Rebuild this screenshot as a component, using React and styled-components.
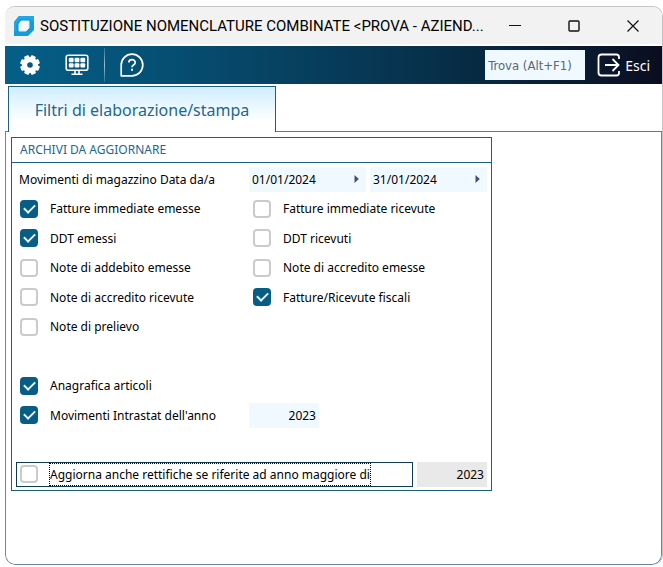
import { useState } from "react";
import styled, { createGlobalStyle } from "styled-components";

const GlobalStyle = createGlobalStyle`
  * {
    box-sizing: border-box;
  }
  body {
    margin: 0;
    background: #fff;
    color: #000;
    font-family: "Noto Sans", sans-serif;
    font-size: 12px;
  }
  button, input {
    font: inherit;
    color: inherit;
  }
`;

const Window = styled.div`
  display: flex;
  flex-direction: column;
  min-height: calc(100vh - 8px);
  margin: 6px 0 0 5px;
  border: 1px solid #c4c4c4;
  border-width: 1px 1px 0 0;
  border-radius: 10px;
  overflow: hidden;
`;

const TitleBar = styled.header`
  display: flex;
  align-items: center;
  height: 37px;
  padding-left: 9px;
  background: #f2f2f2;
`;

const Title = styled.h1`
  flex: 1;
  min-width: 0;
  margin: 0 0 0 6px;
  font-family: Roboto, sans-serif;
  font-size: 15px;
  font-weight: 400;
  white-space: nowrap;
`;

const WindowButton = styled.button`
  display: flex;
  flex-shrink: 0;
  align-items: center;
  justify-content: center;
  width: 59px;
  height: 37px;
  padding: 0;
  border: none;
  background: none;
`;

const Toolbar = styled.div`
  display: flex;
  align-items: center;
  height: 38px;
  margin-top: 2px;
  padding: 0 12px 0 14px;
  background: linear-gradient(90deg, #045f88 0%, #064b6e 30%, #07304a 65%, #091d35 85%, #0b0d1f 100%);
  color: #fff;
`;

const ToolButton = styled.button`
  display: flex;
  align-items: center;
  gap: 4px;
  padding: 0;
  border: none;
  background: none;
  font-size: 14px;
`;

const ToolGroup = styled.div`
  display: flex;
  align-items: center;
  flex: 1;
  gap: 24px;
`;

const Divider = styled.span`
  width: 1px;
  height: 34px;
  margin: 0 -9px;
  background: linear-gradient(#2b7296, #9cc0d0, #2b7296);
`;

const SearchInput = styled.input`
  width: 100px;
  height: 30px;
  margin-right: 12px;
  padding: 0 3px;
  border: none;
  border-radius: 0;
  background: #f0f9ff;
  font-family: "DejaVu Sans Condensed", sans-serif;
  font-size: 13px;
  &::placeholder {
    color: #5c6670;
    opacity: 1;
  }
`;

const TabBar = styled.div`
  display: flex;
  height: 48px;
  padding: 2px 0 0 3px;
  background: linear-gradient(#5b7d9c, #5b7d9c) bottom / 100% 1px no-repeat;
`;

const Tab = styled.button`
  width: 268px;
  padding: 0;
  border: 1px solid #1d5f7e;
  border-bottom: none;
  background: linear-gradient(#cfeeff, #fff 75%);
  color: #22678d;
  font-size: 16px;
`;

const Page = styled.main`
  flex: 1;
  padding: 5px;
  border: 1px solid #6b84a6;
  border-top: none;
  border-radius: 0 0 10px 10px;
`;

const Panel = styled.section`
  max-width: 481px;
  border: 1px solid #1d5f7e;
`;

const PanelTitle = styled.h2`
  height: 25px;
  margin: 0;
  padding-left: 8px;
  border-bottom: 1px solid #1d5f7e;
  color: #22678d;
  font-size: 12px;
  font-weight: 400;
  line-height: 24px;
`;

const FilterGrid = styled.div`
  display: grid;
  grid-template-columns: 233px minmax(0, 1fr);
  grid-template-rows: repeat(5, 30px 29px) 30px;
  align-items: center;
  padding: 1px 4px;
`;

const RangeLabel = styled.span`
  padding-left: 3px;
`;

const FieldRow = styled.div`
  display: flex;
  gap: 4px;
`;

const FocusRow = styled(FieldRow)`
  grid-row: 11;
  grid-column: 1 / -1;
`;

const DateBox = styled.div`
  display: flex;
  flex: 1;
  align-items: center;
  min-width: 0;
  height: 25px;
  padding-right: 7px;
  background: #f0f9ff;
`;

const DateInput = styled.input`
  flex: 1;
  min-width: 0;
  padding: 0 3px;
  border: none;
  background: none;
`;

const PickerButton = styled.button`
  display: flex;
  padding: 0;
  border: none;
  background: none;
`;

const YearInput = styled.input`
  width: 70px;
  height: 25px;
  padding: 0 3px;
  border: none;
  border-radius: 0;
  background: ${(p) => (p.disabled ? "#e9e9e9" : "#f0f9ff")};
  color: #000;
  text-align: right;
  ${(p) => p.$row && `grid-row: ${p.$row};`}
`;

const CheckLabel = styled.label`
  display: flex;
  align-items: center;
  gap: 12px;
  height: 25px;
  padding-left: 4px;
  ${(p) => p.$row && `grid-row: ${p.$row};`}
  ${(p) =>
    p.$focused &&
    `
    flex: 1;
    gap: 11px;
    padding-left: 3px;
    border: 1px solid #0c3c54;
  `}
`;

const CheckBox = styled.input`
  display: flex;
  align-items: center;
  justify-content: center;
  appearance: none;
  width: 18px;
  height: 18px;
  margin: 0;
  border: 2px solid #cbcbcb;
  border-radius: 4px;
  background: #fff;
  &:checked {
    border-color: #075d84;
    background: #075d84;
  }
  &:checked::after {
    content: "";
    width: 9px;
    height: 5px;
    margin-top: -3px;
    border: solid #e4f3fa;
    border-width: 0 0 2px 2px;
    transform: rotate(-45deg);
  }
`;

const CheckText = styled.span`
  ${(p) =>
    p.$focused &&
    `
    height: 23px;
    border: 1px dotted #000;
    line-height: 21px;
  `}
`;

const Logo = () => (
  <svg width="20" height="20" viewBox="0 0 20 20">
    <path d="M5 0H20V14L14 20H0V6Z" fill="#149bd8" />
    <path d="M5 0H20V6L14 3H6L2 8V14L0 16V6Z" fill="#1fa8e2" />
    <path d="M7 5H15V12L12 15H5V8Z" fill="#f4f8fb" stroke="#d6edf8" strokeLinejoin="round" />
  </svg>
);

const GearIcon = () => (
  <svg width="22" height="22" viewBox="-11 -11 22 22" fill="#fff">
    {[0, 45, 90, 135].map((angle) => (
      <rect key={angle} x="-2.5" y="-9.9" width="5" height="19.8" rx="1" transform={`rotate(${angle + 22})`} />
    ))}
    <circle r="5.4" fill="none" stroke="#fff" strokeWidth="5.2" />
    <circle r="2.8" fill="#055980" />
  </svg>
);

const MonitorIcon = () => (
  <svg width="24" height="22" viewBox="0 0 24 22" fill="none" stroke="#fff">
    <rect x="1.2" y="1.2" width="21.6" height="15" rx="2" strokeWidth="1.6" />
    <path d="M10 16.5V19.5M14 16.5V19.5M6.5 20.3H17.5" strokeWidth="1.6" />
    <g fill="#fff" stroke="none">
      {[3.8, 9.6, 15.4].map((x) => (
        <g key={x}>
          <rect x={x} y="3.8" width="4.8" height="4.4" rx="1" />
          <rect x={x} y="9.2" width="4.8" height="4.4" rx="1" />
        </g>
      ))}
    </g>
  </svg>
);

const HelpIcon = () => (
  <svg width="24" height="24" viewBox="0 0 24 24" fill="none" stroke="#fff" strokeWidth="1.7">
    <path d="M1.2 22.8V12A10.8 10.8 0 1 1 12 22.8Z" strokeLinejoin="round" />
    <path d="M8.8 9.6C8.8 5.6 15.2 5.6 15.2 9.5C15.2 12 12 12 12 14.2" />
    <path d="M12 15.8V17.8" strokeWidth="2" />
  </svg>
);

const ExitIcon = () => (
  <svg width="24" height="24" viewBox="0 0 24 24" fill="none" stroke="#fff" strokeWidth="1.8">
    <path d="M22 6V4Q22 1.5 19.5 1.5H4.5Q1.5 1.5 1.5 4.5V19.5Q1.5 22.5 4.5 22.5H19.5Q22 22.5 22 20V18" />
    <path d="M8 12H21.5M15.5 6L21.5 12L15.5 18" />
  </svg>
);

const ArrowIcon = () => (
  <svg width="5" height="8" viewBox="0 0 5 8">
    <path d="M0.5 0L4.8 4L0.5 8Z" fill="#454f72" />
  </svg>
);

const archives = [
  { id: "fattureEmesse", text: "Fatture immediate emesse", checked: true },
  { id: "fattureRicevute", text: "Fatture immediate ricevute" },
  { id: "ddtEmessi", text: "DDT emessi", checked: true },
  { id: "ddtRicevuti", text: "DDT ricevuti" },
  { id: "addebitoEmesse", text: "Note di addebito emesse" },
  { id: "accreditoEmesse", text: "Note di accredito emesse" },
  { id: "accreditoRicevute", text: "Note di accredito ricevute" },
  { id: "fiscali", text: "Fatture/Ricevute fiscali", checked: true },
  { id: "prelievo", text: "Note di prelievo" },
];

const Check = ({ text, checked = false, row, focused }) => {
  const [on, setOn] = useState(checked);

  return (
    <CheckLabel $row={row} $focused={focused}>
      <CheckBox type="checkbox" checked={on} onChange={() => setOn(!on)} />
      <CheckText $focused={focused}>{text}</CheckText>
    </CheckLabel>
  );
};

const DateField = ({ label, value }) => (
  <DateBox>
    <DateInput type="text" aria-label={label} defaultValue={value} />
    <PickerButton type="button" aria-label="Calendario">
      <ArrowIcon />
    </PickerButton>
  </DateBox>
);

const App = () => {
  return (
    <>
      <GlobalStyle />
      <Window>
        <TitleBar>
          <Logo />
          <Title>SOSTITUZIONE NOMENCLATURE COMBINATE &lt;PROVA - AZIEND...</Title>
          <WindowButton type="button" aria-label="Riduci">
            <svg width="12" height="12" stroke="#111"><path d="M0 5.5H12" /></svg>
          </WindowButton>
          <WindowButton type="button" aria-label="Ingrandisci">
            <svg width="12" height="12" fill="none" stroke="#111" strokeWidth="1.4"><rect x="1" y="1" width="10" height="10" rx="1" /></svg>
          </WindowButton>
          <WindowButton type="button" aria-label="Chiudi">
            <svg width="12" height="12" stroke="#111" strokeWidth="1.2"><path d="M0.5 0.5L11.5 11.5M11.5 0.5L0.5 11.5" /></svg>
          </WindowButton>
        </TitleBar>
        <Toolbar>
          <ToolGroup>
            <ToolButton type="button" aria-label="Impostazioni"><GearIcon /></ToolButton>
            <ToolButton type="button" aria-label="Schermo"><MonitorIcon /></ToolButton>
            <Divider />
            <ToolButton type="button" aria-label="Aiuto"><HelpIcon /></ToolButton>
          </ToolGroup>
          <SearchInput type="text" aria-label="Trova" placeholder="Trova (Alt+F1)" />
          <ToolButton type="button"><ExitIcon />Esci</ToolButton>
        </Toolbar>
        <TabBar>
          <Tab type="button">Filtri di elaborazione/stampa</Tab>
        </TabBar>
        <Page>
          <Panel>
            <PanelTitle>ARCHIVI DA AGGIORNARE</PanelTitle>
            <FilterGrid>
              <RangeLabel>Movimenti di magazzino Data da/a</RangeLabel>
              <FieldRow>
                <DateField label="Data da" value="01/01/2024" />
                <DateField label="Data a" value="31/01/2024" />
              </FieldRow>
              {archives.map((item) => (
                <Check key={item.id} text={item.text} checked={item.checked} />
              ))}
              <Check row={8} text="Anagrafica articoli" checked />
              <Check row={9} text="Movimenti Intrastat dell'anno" checked />
              <YearInput $row={9} type="text" aria-label="Anno Intrastat" defaultValue="2023" />
              <FocusRow>
                <Check text="Aggiorna anche rettifiche se riferite ad anno maggiore di" focused />
                <YearInput type="text" aria-label="Anno rettifiche" defaultValue="2023" disabled />
              </FocusRow>
            </FilterGrid>
          </Panel>
        </Page>
      </Window>
    </>
  );
};

export default App;
